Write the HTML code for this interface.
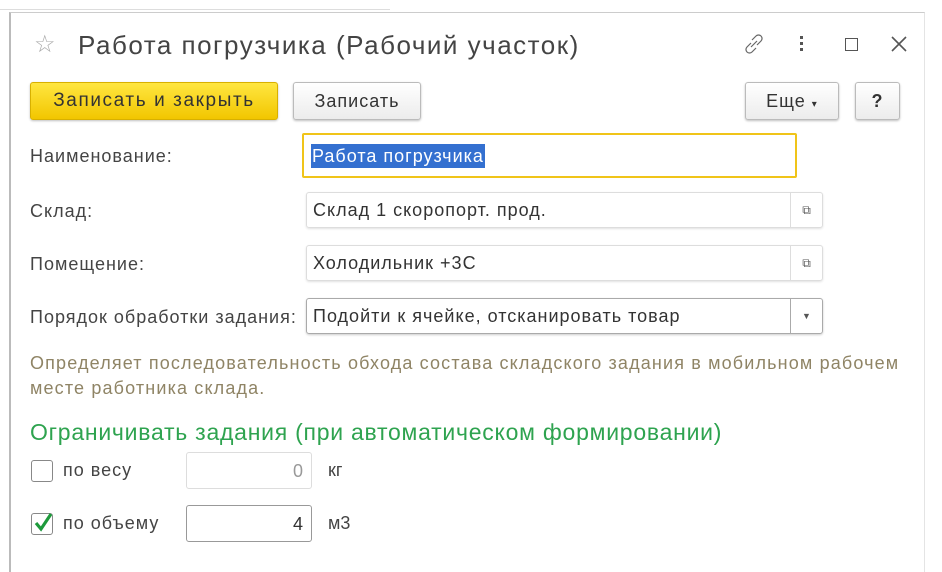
<!DOCTYPE html>
<html><head><meta charset="utf-8"><style>
*{box-sizing:border-box;margin:0;padding:0}
body{width:942px;height:565px;background:#fff;font-family:"Liberation Sans",sans-serif;color:#333;position:relative;overflow:hidden}
.a{position:absolute;white-space:nowrap}
.win{position:absolute;left:9px;top:12px;width:916px;height:560px;border-left:2px solid #bbb;border-top:1px solid #ccc;border-right:1px solid #e4e4e4}
.btn{position:absolute;border:1px solid #bbb;border-radius:3px;background:linear-gradient(#fff,#ececec);box-shadow:0 1px 2px rgba(0,0,0,.25);font-size:18px;text-align:center;line-height:36px;color:#333;letter-spacing:1px}
.fld{position:absolute;left:306px;width:517px;height:36px;border:1px solid #ddd;border-radius:3px;box-shadow:0 1px 2px rgba(0,0,0,.12);font-size:18px;line-height:34px;padding-left:6px;color:#333;letter-spacing:1px}
.fld .ic{position:absolute;right:0;top:0;width:32px;height:34px;border-left:1px solid #ddd;font-size:12px;text-align:center;color:#555;letter-spacing:0}
.lbl{position:absolute;left:30px;font-size:18px;color:#444;letter-spacing:1px;white-space:nowrap}
</style></head><body>
<div style="position:absolute;left:0;top:0;width:390px;height:10px;border-bottom:1px solid #ddd"></div>
<div class="win"></div>
<div class="a" style="left:34px;top:30px;font-size:24px;color:#aaa">☆</div>
<div class="a" style="left:78px;top:30px;font-size:26px;color:#444;letter-spacing:1.5px">Работа погрузчика (Рабочий участок)</div>
<svg class="a" style="left:740px;top:30px" width="28" height="28" viewBox="0 0 28 28" fill="none" stroke="#666" stroke-width="1.2"><path d="M12 10l4-4a3.5 3.5 0 015 5l-4 4M16 18l-4 4a3.5 3.5 0 01-5-5l4-4M11 17l6-6"/></svg>
<div class="a" style="left:800px;top:36px;width:3px;height:3px;background:#555;box-shadow:0 6px 0 #555,0 12px 0 #555"></div>
<div class="a" style="left:845px;top:38px;width:13px;height:13px;border:1.6px solid #555"></div>
<svg class="a" style="left:890px;top:35px" width="18" height="18" viewBox="0 0 18 18"><path d="M2 2L16 16M16 2L2 16" stroke="#555" stroke-width="1.6"/></svg>
<div class="btn" style="left:30px;top:82px;width:248px;height:38px;background:linear-gradient(#ffe640,#f2c600);border-color:#d8b000;color:#333;font-size:19px;letter-spacing:1.6px">Записать и закрыть</div>
<div class="btn" style="left:293px;top:82px;width:128px;height:38px">Записать</div>
<div class="btn" style="left:745px;top:82px;width:94px;height:38px">Еще <span style="font-size:10px">▾</span></div>
<div class="btn" style="left:855px;top:82px;width:45px;height:38px;font-weight:bold">?</div>
<div class="lbl" style="top:146px">Наименование:</div>
<div class="a" style="left:302px;top:133px;width:495px;height:45px;border:2px solid #f0c419;border-radius:2px"></div>
<div class="a" style="left:311px;top:144px;height:24px;background:#3470d0;color:#fff;font-size:18px;line-height:24px;padding:0 1px;letter-spacing:1px">Работа погрузчика</div>
<div class="lbl" style="top:201px">Склад:</div>
<div class="fld" style="top:192px">Склад 1 скоропорт. прод.<div class="ic">⧉</div></div>
<div class="lbl" style="top:254px">Помещение:</div>
<div class="fld" style="top:245px">Холодильник +3С<div class="ic">⧉</div></div>
<div class="lbl" style="top:307px">Порядок обработки задания:</div>
<div class="fld" style="top:298px;border-color:#aaa;box-shadow:0 1px 2px rgba(0,0,0,.2)">Подойти к ячейке, отсканировать товар<div class="ic" style="border-color:#aaa;font-size:9px">▼</div></div>
<div class="a" style="left:30px;top:351px;font-size:18px;color:#8f8465;line-height:25px;white-space:normal;width:900px;letter-spacing:1.15px">Определяет последовательность обхода состава складского задания в мобильном рабочем месте работника склада.</div>
<div class="a" style="left:30px;top:419px;font-size:23px;color:#2ea34f;letter-spacing:0.75px">Ограничивать задания (при автоматическом формировании)</div>
<div class="a" style="left:31px;top:460px;width:22px;height:22px;border:1px solid #888;border-radius:3px"></div>
<div class="a" style="left:63px;top:460px;font-size:18px;color:#444;letter-spacing:1px">по весу</div>
<div class="a" style="left:186px;top:452px;width:126px;height:37px;border:1px solid #ddd;border-radius:3px;font-size:18px;color:#999;text-align:right;padding-right:8px;line-height:36px">0</div>
<div class="a" style="left:328px;top:460px;font-size:18px;color:#444">кг</div>
<div class="a" style="left:31px;top:513px;width:22px;height:22px;border:1px solid #888;border-radius:3px"></div>
<svg class="a" style="left:31px;top:510px" width="24" height="24" viewBox="0 0 24 24"><path d="M5 13l5 6L20 4" fill="none" stroke="#1e9a3c" stroke-width="3.2"/></svg>
<div class="a" style="left:63px;top:513px;font-size:18px;color:#444;letter-spacing:1px">по объему</div>
<div class="a" style="left:186px;top:505px;width:126px;height:37px;border:1px solid #999;border-radius:3px;font-size:18px;color:#333;text-align:right;padding-right:8px;line-height:36px">4</div>
<div class="a" style="left:328px;top:513px;font-size:18px;color:#444">м3</div>
</body></html>
